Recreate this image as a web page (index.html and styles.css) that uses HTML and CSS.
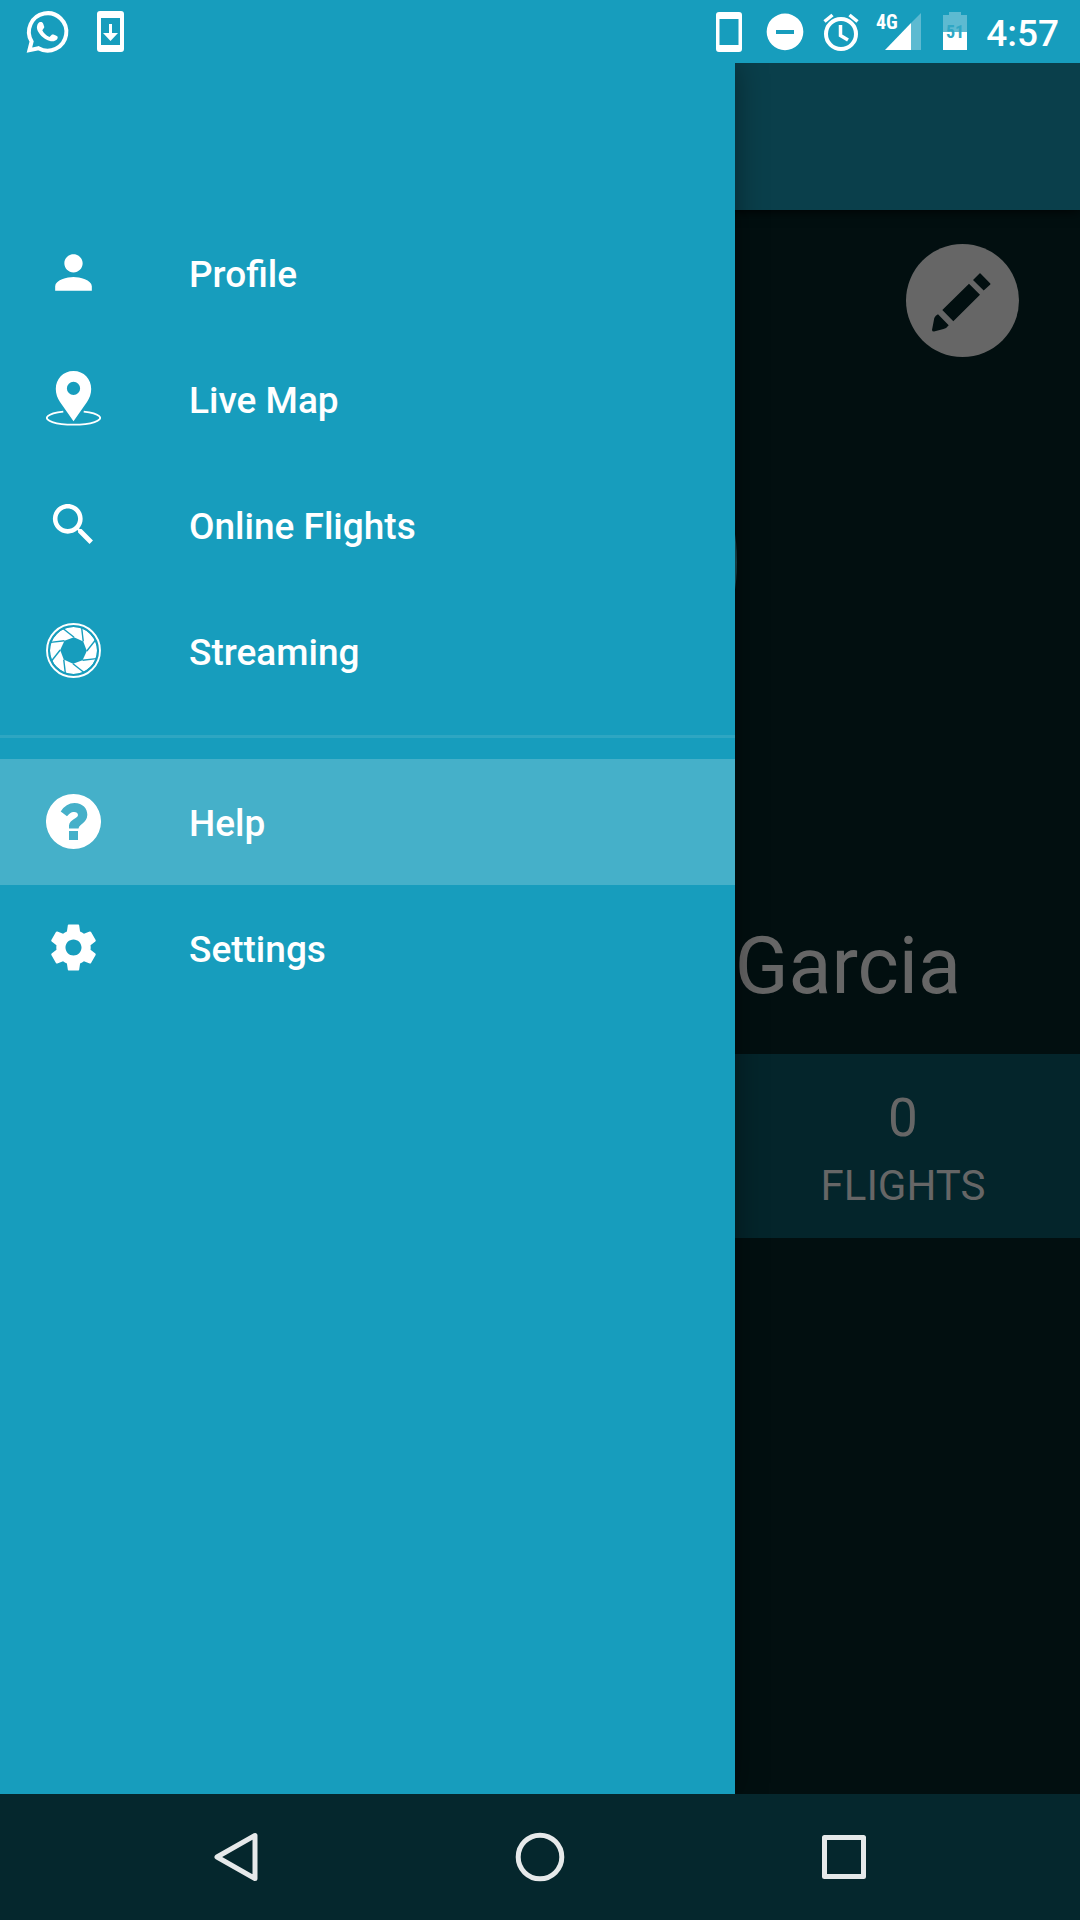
FILE: index.html
```html
<!DOCTYPE html>
<html lang="en">
<head>
<meta charset="utf-8">
<meta name="viewport" content="width=device-width, initial-scale=1">
<title>Flight profile</title>
<link rel="stylesheet" href="styles.css">
</head>
<body>
<header class="status">
  <div class="status-group">
    <svg class="notice-icon" viewBox="16 0 63 63" aria-hidden="true">
      <path d="M38.500 48.200 L29.400 50.200 L31.600 41.500 A18.700 18.700 0 1 1 38.500 48.200 Z" fill="none" stroke="#fff" stroke-width="4"/>
      <path d="M39 22.500C41 21.500 42.500 22 43.300 24L44.300 27C44.300 28 43 29 42.300 30.300C43.500 33 46 35.500 49.500 37L51.500 35C52.500 34 54 34.500 57.500 36.500C58.500 38.500 56 41.300 52.500 41.300C44 41 36 31.500 37 26.500C37.300 24.500 38 23.300 39 22.500Z" fill="#fff"/>
    </svg>
    <svg class="notice-icon" viewBox="79 0 63 63" aria-hidden="true">
      <path fill="#fff" fill-rule="evenodd" d="M100 11H121Q124 11 124 14V49Q124 52 121 52H100Q97 52 97 49V14Q97 11 100 11ZM101 18V45H120V18Z"/>
      <path fill="#fff" d="M109 24H112V33H118L110.500 41L103 33H109Z"/>
    </svg>
  </div>
  <div class="status-group">
    <svg class="system-icon" viewBox="701 0 56 63" aria-hidden="true">
      <path fill="#fff" fill-rule="evenodd" d="M719 12H739Q742 12 742 15V49Q742 52 739 52H719Q716 52 716 49V15Q716 12 719 12ZM719.500 19V45H738.500V19Z"/>
    </svg>
    <svg class="system-icon" viewBox="757 0 56 63" aria-hidden="true">
      <path fill="#fff" fill-rule="evenodd" d="M785 13.500A18.300 18.300 0 1 0 785 50.200A18.300 18.300 0 1 0 785 13.500ZM776 30V34H794V30Z"/>
    </svg>
    <svg class="system-icon" viewBox="813 0 56 63" aria-hidden="true">
      <circle cx="841" cy="34" r="15" fill="none" stroke="#fff" stroke-width="4"/>
      <path d="M840.500 25V35.500L848 40M824.500 21.500L832.500 15M857.500 21.500L849.500 15" fill="none" stroke="#fff" stroke-width="3.500"/>
    </svg>
    <svg class="system-icon" viewBox="869 0 56 63" role="img" aria-label="4G signal">
      <path d="M921 13V50H911V23Z" fill="#5dbad1"/>
      <path d="M911 23V50H885Z" fill="#fff"/>
      <text class="network" x="876" y="29">4G</text>
    </svg>
    <svg class="system-icon" viewBox="925 0 56 63" role="img" aria-label="Battery 51 percent">
      <path d="M949 12H961V15H967V32H943V15H949Z" fill="#5dbad1"/>
      <path d="M943 32H967V50H943Z" fill="#fff"/>
      <text class="battery-level" x="955" y="38" text-anchor="middle">51</text>
    </svg>
    <time class="clock">4:57</time>
  </div>
</header>

<div class="screen">
  <main class="page">
    <div class="app-bar"></div>
    <section class="profile">
      <button class="edit" type="button" aria-label="Edit profile">
        <svg viewBox="0 0 113 113" aria-hidden="true">
          <path d="M67 36L73.500 29.500Q74 29 74.500 29.500L84.300 39.500Q84.600 40 84.300 40.500L77.700 46.500ZM63 39.700L74 50.700L47.300 77.300L36.300 66ZM32 70.300L42.700 81.300Q41 84 37.500 85L28 87.600Q26 87.600 26 86L28.300 74Q29.500 71.500 32 70.300Z"/>
        </svg>
      </button>
      <div class="avatar"></div>
      <h1 class="name">Garcia</h1>
    </section>
    <section class="stats">
      <div class="stat">
        <span class="stat-value">0</span>
        <span class="stat-label">FLIGHTS</span>
      </div>
    </section>
  </main>

  <nav class="drawer" aria-label="Main menu">
    <ul class="menu">
      <li><a class="item" href="#profile">
        <svg class="item-icon" viewBox="0 0 24 24" aria-hidden="true"><path d="M12 12c2.210 0 4-1.790 4-4s-1.790-4-4-4-4 1.790-4 4 1.790 4 4 4zm0 2c-2.670 0-8 1.340-8 4v2h16v-2c0-2.660-5.330-4-8-4z"/></svg>
        <span class="item-label">Profile</span></a></li>
      <li><a class="item" href="#map">
        <svg class="item-icon" viewBox="0 0 55 55" aria-hidden="true">
          <path fill-rule="evenodd" d="M27.500 0C17 0 9.800 8 9.800 18C9.800 23 11.500 27 14 31L27.500 50.300L41 31C43.500 27 45.200 23 45.200 18C45.200 8 38 0 27.500 0ZM27.500 10.800A6.600 6.600 0 1 1 27.500 24A6.600 6.600 0 1 1 27.500 10.800Z"/>
          <path d="M17.300 40.600A26.600 6.800 0 1 0 37.700 40.600" fill="none" stroke="#fff" stroke-width="1.800"/>
        </svg>
        <span class="item-label">Live Map</span></a></li>
      <li><a class="item" href="#flights">
        <svg class="item-icon" viewBox="0 0 24 24" aria-hidden="true"><path d="M15.500 14h-.790l-.280-.270C15.410 12.590 16 11.110 16 9.500 16 5.910 13.090 3 9.500 3S3 5.910 3 9.500 5.910 16 9.500 16c1.610 0 3.090-.590 4.230-1.570l.270.280v.790l5 4.990L20.490 19l-4.990-5zm-6 0C7.010 14 5 11.990 5 9.500S7.010 5 9.500 5 14 7.010 14 9.500 11.990 14 9.500 14z"/></svg>
        <span class="item-label">Online Flights</span></a></li>
      <li><a class="item" href="#streaming">
        <svg class="item-icon" viewBox="-27.500 -27.500 55 55" aria-hidden="true">
          <defs>
            <path id="cut" d="M-10.500 -22L0.500 -13.300"/>
            <mask id="blades" maskUnits="userSpaceOnUse" x="-28" y="-28" width="56" height="56">
              <circle r="23.500" fill="#fff"/>
              <polygon fill="#000" points="0.500,-13.300 9.750,-9.050 13.300,0.500 9.050,9.750 -0.500,13.300 -9.750,9.050 -13.300,-0.500 -9.050,-9.750"/>
              <g stroke="#000" stroke-width="1.400">
                <use href="#cut"/><use href="#cut" transform="rotate(45)"/><use href="#cut" transform="rotate(90)"/><use href="#cut" transform="rotate(135)"/><use href="#cut" transform="rotate(180)"/><use href="#cut" transform="rotate(225)"/><use href="#cut" transform="rotate(270)"/><use href="#cut" transform="rotate(315)"/>
              </g>
            </mask>
          </defs>
          <circle r="26.500" fill="none" stroke="#fff" stroke-width="1.900"/>
          <circle r="23.500" mask="url(#blades)"/>
        </svg>
        <span class="item-label">Streaming</span></a></li>
    </ul>
    <hr class="divider">
    <ul class="menu">
      <li><a class="item item-active" href="#help" aria-current="page">
        <svg class="item-icon" viewBox="0 0 55 55" aria-hidden="true">
          <path fill-rule="evenodd" d="M27.500 0A27.500 27.500 0 1 1 27.500 55A27.500 27.500 0 1 1 27.500 0ZM14.700 17.500Q20 9 28.500 9C37 9 41.500 15 41.300 21C41 29 33.500 29.500 32.500 34.500H23V31.500C23.500 25.500 32 24.500 32 21C32 18.500 29.500 17.500 27 18C24.500 18.500 23 20 21 22.300ZM23 37V46H32V37Z"/>
        </svg>
        <span class="item-label">Help</span></a></li>
      <li><a class="item" href="#settings">
        <svg class="item-icon" viewBox="0 0 24 24" aria-hidden="true"><path d="M19.430 12.980c.040-.320.070-.640.070-.980s-.030-.660-.070-.980l2.110-1.650c.190-.150.240-.420.120-.640l-2-3.460c-.120-.220-.390-.300-.610-.220l-2.490 1c-.520-.400-1.080-.730-1.690-.980l-.380-2.650C14.460 2.180 14.250 2 14 2h-4c-.250 0-.460.180-.490.420l-.380 2.650c-.610.250-1.170.590-1.690.980l-2.490-1c-.230-.090-.490 0-.610.220l-2 3.460c-.130.220-.070.490.120.640l2.110 1.650c-.040.320-.070.650-.070.980s.030.660.070.980l-2.110 1.650c-.190.150-.240.420-.120.640l2 3.460c.120.220.390.300.610.220l2.490-1c.520.400 1.080.730 1.690.980l.380 2.650c.030.240.240.420.490.420h4c.250 0 .460-.180.490-.420l.380-2.650c.610-.250 1.170-.590 1.690-.980l2.490 1c.230.090.490 0 .610-.220l2-3.460c.120-.220.070-.490-.120-.640l-2.110-1.650zM12 15.500c-1.930 0-3.500-1.570-3.500-3.500s1.570-3.500 3.500-3.500 3.500 1.570 3.500 3.500-1.570 3.500-3.500 3.500z"/></svg>
        <span class="item-label">Settings</span></a></li>
    </ul>
  </nav>
</div>

<footer class="system-nav">
  <button class="nav-key" type="button" aria-label="Back">
    <svg viewBox="0 0 50 50" aria-hidden="true"><path d="M44 3.500V46.500L6 25Z"/></svg>
  </button>
  <button class="nav-key" type="button" aria-label="Home">
    <svg viewBox="0 0 50 50" aria-hidden="true"><circle cx="25" cy="25" r="21.800"/></svg>
  </button>
  <button class="nav-key" type="button" aria-label="Recent apps">
    <svg viewBox="0 0 50 50" aria-hidden="true"><rect x="5.500" y="5.500" width="39" height="39"/></svg>
  </button>
</footer>
</body>
</html>
```
FILE: styles.css
```css
* {
  box-sizing: border-box;
}

body {
  margin: 0;
  min-height: 100vh;
  display: flex;
  flex-direction: column;
  background: #020f10;
  color: #fff;
  font-family: Roboto, "Liberation Sans", sans-serif;
}

svg {
  display: block;
}

button {
  border: 0;
  padding: 0;
  background: none;
}

/* Status bar */
.status {
  height: 63px;
  padding: 0 21px 0 16px;
  display: flex;
  justify-content: space-between;
  background: #179dbd;
}

.status-group {
  display: flex;
  align-items: center;
}

.notice-icon {
  width: 63px;
  height: 63px;
}

.system-icon {
  width: 56px;
  height: 63px;
}

.network {
  fill: #fff;
  font: 700 20px "Roboto Condensed", Roboto, sans-serif;
}

.battery-level {
  fill: #2fa7c4;
  font: 700 18px "Roboto Condensed", Roboto, sans-serif;
}

.clock {
  padding: 4px 0 0 5px;
  font-size: 37px;
  font-weight: 500;
  line-height: 44px;
}

/* Dimmed page behind the drawer */
.screen {
  position: relative;
  flex: 1;
  display: flex;
  overflow: hidden;
}

.page {
  flex: 1;
  color: #666;
}

.app-bar {
  height: 147px;
  background: #0a3f4b;
  box-shadow: 0 0 12px #000;
}

.profile {
  padding: 34px 61px 42px;
  display: flex;
  flex-direction: column;
}

.edit {
  align-self: flex-end;
  width: 113px;
  height: 113px;
  border-radius: 50%;
  background: #666;
  fill: #020f10;
}

.avatar {
  align-self: center;
  width: 394px;
  height: 394px;
  margin-top: 8px;
  border-radius: 50%;
  background: #1c4a52;
}

.name {
  margin: 161px 0 0;
  padding-right: 58px;
  font-size: 79px;
  font-weight: 400;
  line-height: 92px;
  text-align: right;
}

.stats {
  display: grid;
  grid-template-columns: repeat(3, 1fr);
  gap: 9px;
  padding: 34px 0 27px;
  background: #04252b;
}

.stat {
  grid-column: 3;
  display: flex;
  flex-direction: column;
  align-items: center;
  gap: 13px;
}

.stat-value {
  font-size: 53px;
  line-height: 60px;
}

.stat-label {
  font-size: 42px;
  line-height: 50px;
}

/* Drawer */
.drawer {
  position: absolute;
  top: 0;
  bottom: 0;
  left: 0;
  width: 735px;
  max-width: 85%;
  padding-top: 147px;
  background: #179dbd;
  box-shadow: 0 0 30px rgba(0, 0, 0, 0.4);
}

.menu {
  margin: 0;
  padding: 0;
  list-style: none;
}

.item {
  height: 126px;
  padding: 0 0 2px 46px;
  display: flex;
  align-items: center;
  gap: 88px;
  color: #fff;
  text-decoration: none;
}

.item-active {
  background: #45b0c9;
}

.item-icon {
  width: 55px;
  height: 55px;
  fill: #fff;
}

.item-label {
  padding-top: 5px;
  font-size: 37px;
  font-weight: 500;
  line-height: 44px;
}

.divider {
  height: 3px;
  margin: 21px 0;
  border: 0;
  background: #2ea6c2;
}

/* System navigation */
.system-nav {
  height: 126px;
  display: flex;
  justify-content: center;
  background: #05272d;
}

.nav-key {
  width: 304px;
  display: flex;
  align-items: center;
  justify-content: center;
}

.nav-key svg {
  width: 50px;
  height: 50px;
  fill: none;
  stroke: #e6e9ea;
  stroke-width: 5px;
  stroke-linejoin: round;
}
```
